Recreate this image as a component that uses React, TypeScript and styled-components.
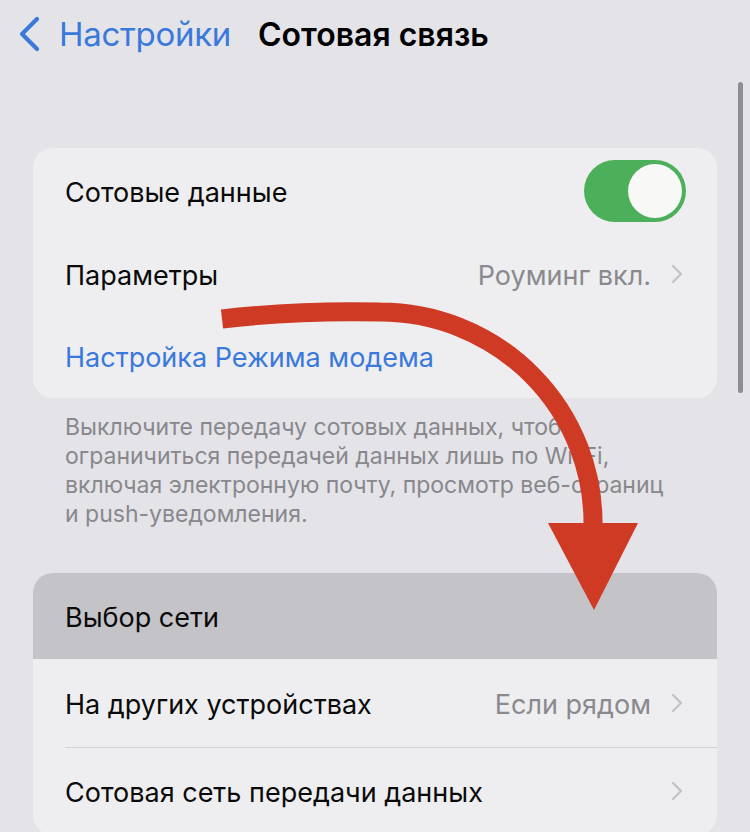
import React from 'react';
import styled, { createGlobalStyle } from 'styled-components';

const GlobalStyle = createGlobalStyle`
  html, body {
    margin: 0;
    padding: 0;
    background: #e4e3e8;
  }
  body {
    font-family: Inter, "Noto Sans", "DejaVu Sans", sans-serif;
    -webkit-font-smoothing: antialiased;
  }
`;

const Screen = styled.div`
  position: relative;
  width: 750px;
  height: 832px;
  overflow: hidden;
  background: #e4e3e8;
`;

const NavBar = styled.div`
  display: flex;
  align-items: center;
  height: 68px;
  padding-left: 17px;
`;

const BackButton = styled.div`
  display: flex;
  align-items: center;
  gap: 16px;
  color: #3a79dc;
  font-size: 33px;
  letter-spacing: -0.3px;
`;

const Title = styled.div`
  margin-left: 27px;
  font-size: 32px;
  font-weight: 600;
  color: #000;
`;

const Content = styled.div`
  padding: 80px 33px 0 33px;
`;

const Card = styled.div`
  background: #eeeef0;
  border-radius: 20px;
  overflow: hidden;
`;

const Row = styled.div<{ $h: number; $active?: boolean }>`
  position: relative;
  display: flex;
  align-items: center;
  height: ${p => p.$h}px;
  padding: 0 31px 0 32px;
  background: ${p => (p.$active ? '#c4c3c8' : 'transparent')};

  & + &::before {
    content: '';
    position: absolute;
    top: 0;
    left: 32px;
    right: 0;
    height: 1px;
    background: #d3d3d7;
  }
`;

const Label = styled.span<{ $link?: boolean }>`
  flex: 1;
  font-size: 27px;
  padding-top: 3px;
  color: ${p => (p.$link ? '#3a79dc' : '#0a0a0a')};
`;

const Value = styled.span`
  font-size: 27px;
  padding-top: 3px;
  color: #8a8a8e;
  margin-right: 20px;
`;

const Chevron = styled.svg`
  width: 12px;
  height: 20px;
  margin-right: 3px;
  flex: none;
`;

const Toggle = styled.div<{ $on: boolean }>`
  position: relative;
  width: 102px;
  height: 62px;
  border-radius: 31px;
  background: ${p => (p.$on ? '#4caf5a' : '#d6d6da')};
  flex: none;

  &::after {
    content: '';
    position: absolute;
    top: 4px;
    left: ${p => (p.$on ? '44px' : '4px')};
    width: 54px;
    height: 54px;
    border-radius: 50%;
    background: #f8f8f7;
  }
`;

const Note = styled.p`
  margin: 0;
  padding: 15px 32px 44px 32px;
  font-size: 23px;
  line-height: 29px;
  color: #88888c;
`;

const ScrollThumb = styled.div`
  position: absolute;
  top: 82px;
  right: 7px;
  width: 5px;
  height: 311px;
  border-radius: 3px;
  background: #8e8e92;
`;

const Overlay = styled.svg`
  position: absolute;
  left: 0;
  top: 0;
  width: 750px;
  height: 832px;
  pointer-events: none;
`;

function ChevronRight() {
  return (
    <Chevron viewBox="0 0 12 20">
      <path d="M2 2 L10 10 L2 18" fill="none" stroke="#c3c3c7" strokeWidth="2.4"
        strokeLinecap="round" strokeLinejoin="round" />
    </Chevron>
  );
}

function BackChevron() {
  return (
    <svg width="26" height="36" viewBox="0 0 26 36">
      <path d="M20 3 L5 18 L20 33" fill="none" stroke="#3a79dc" strokeWidth="4.2"
        strokeLinecap="round" strokeLinejoin="round" />
    </svg>
  );
}

export default function App() {
  return (
    <Screen>
      <GlobalStyle />
      <NavBar>
        <BackButton>
          <BackChevron />
          Настройки
        </BackButton>
        <Title>Сотовая связь</Title>
      </NavBar>

      <Content>
        <Card>
          <Row $h={86}>
            <Label>Сотовые данные</Label>
            <Toggle $on />
          </Row>
          <Row $h={79}>
            <Label>Параметры</Label>
            <Value>Роуминг вкл.</Value>
            <ChevronRight />
          </Row>
          <Row $h={85}>
            <Label $link>Настройка Режима модема</Label>
          </Row>
        </Card>

        <Note>
          Выключите передачу сотовых данных, чтобы<br />
          ограничиться передачей данных лишь по Wi-Fi,<br />
          включая электронную почту, просмотр веб-страниц<br />
          и push-уведомления.
        </Note>

        <Card>
          <Row $h={86} $active>
            <Label>Выбор сети</Label>
            <ChevronRight />
          </Row>
          <Row $h={88}>
            <Label>На других устройствах</Label>
            <Value>Если рядом</Value>
            <ChevronRight />
          </Row>
          <Row $h={88}>
            <Label>Сотовая сеть передачи данных</Label>
            <ChevronRight />
          </Row>
        </Card>
      </Content>

      <ScrollThumb />

      {/* red pointer arrow drawn over the list */}
      <Overlay viewBox="0 0 750 832">
        <path d="M222 319 Q300 310 380 312 A213 211 0 0 1 593 526"
          fill="none" stroke="#cf3a25" strokeWidth="19" />
        <polygon points="548,523 638,523 594,610" fill="#cf3a25" />
      </Overlay>
    </Screen>
  );
}
